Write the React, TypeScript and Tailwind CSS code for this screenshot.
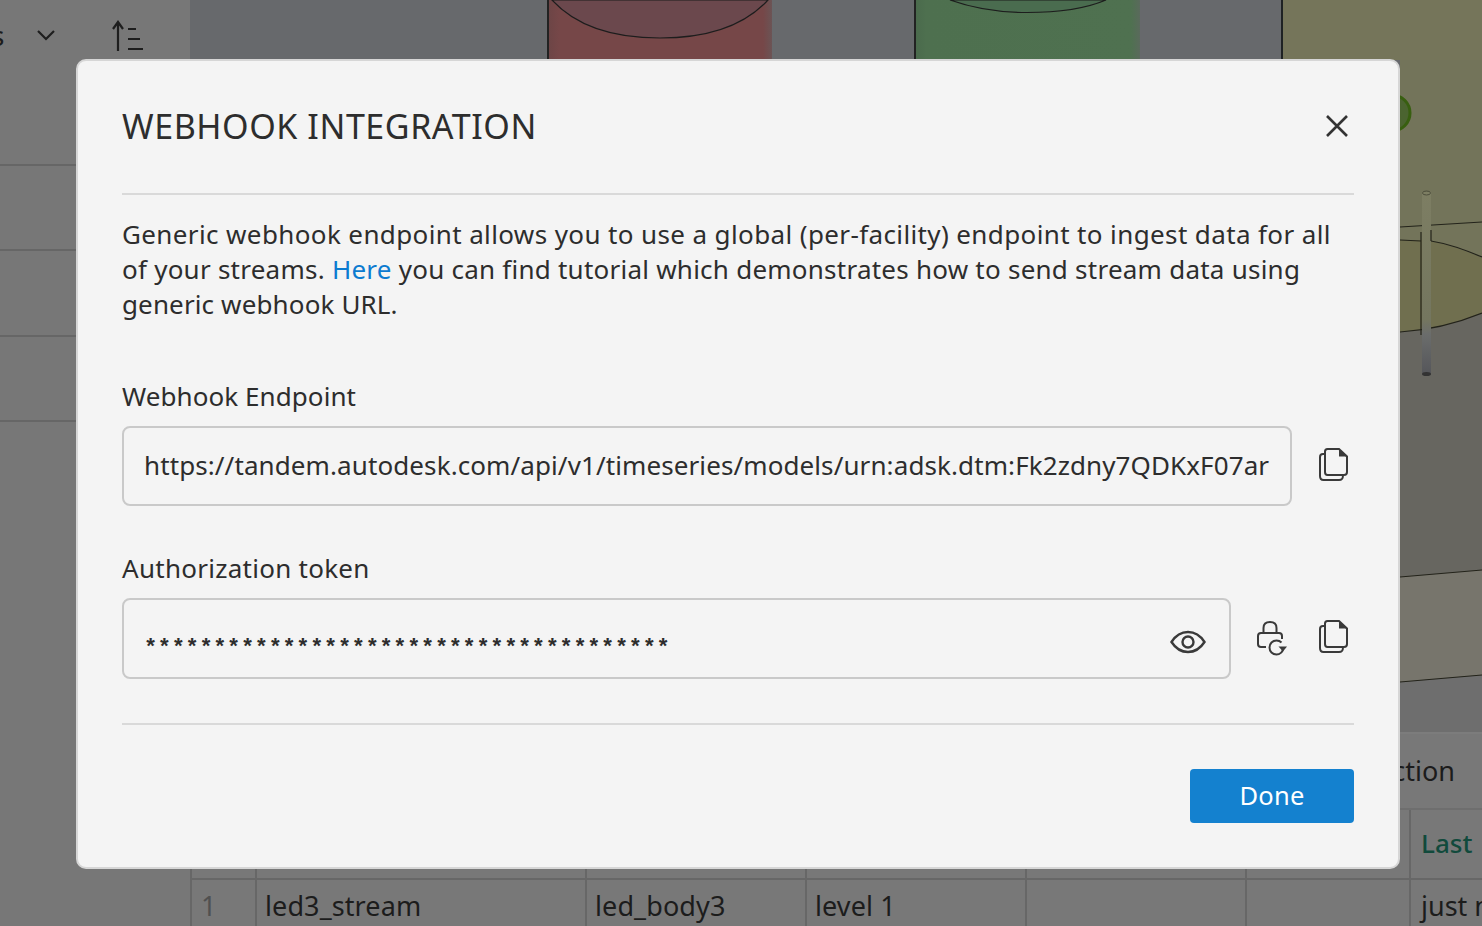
const font = { fontFamily: '"Noto Sans", "Liberation Sans", sans-serif' };

function CopyIcon() {
  return (
    <svg width="32" height="34" viewBox="0 0 32 34" fill="none" stroke="#3a3a3a" strokeWidth="2" className="block">
      <path d="M7 3.500C7 2 8 1 9.500 1H21L29 8.500V24C29 26 28 27 26 27H9.500C8 27 7 26 7 24Z" />
      <path d="M21 1.500V8.500H29L21 1.500Z" fill="#3a3a3a" stroke="none" />
      <path d="M7 6H5C3 6 2 7 2 9V28C2 31 3 32 5.500 32H21C24 32 25 31 25 27" />
    </svg>
  );
}

function LockIcon() {
  return (
    <svg width="32" height="38" viewBox="0 0 32 38" fill="none" stroke="#3a3a3a" strokeWidth="2" className="block">
      <path d="M7.500 13V8C7.500 4 10 2 14 2C18 2 20.500 4 20.500 8V13" />
      <path d="M10 27H5C3 27 2 26 2 24V16C2 14 3 13 5 13H23C25 13 26 14 26 16V19" />
      <path d="M25.500 22.500C24 21 22.500 20.500 20.500 20.500C16.500 20.500 13.500 23.500 13.500 27.500C13.500 31.500 16.500 34.500 20.500 34.500C24 34.500 26.500 32 27 29" />
      <path d="M22.500 26.500H31L27 31.500Z" fill="#3a3a3a" stroke="none" />
    </svg>
  );
}

function EyeIcon() {
  return (
    <svg width="36" height="24" viewBox="0 0 36 24" fill="none" stroke="#3a3a3a" strokeWidth="2.400" className="block">
      <path d="M1.500 12C6 5 11.500 2 18 2C24.500 2 30 5 34.500 12C30 19 24.500 22 18 22C11.500 22 6 19 1.500 12Z" />
      <circle cx="18" cy="12" r="5.500" />
    </svg>
  );
}

function CloseIcon() {
  return (
    <svg width="24" height="24" viewBox="0 0 24 24" fill="none" stroke="#333333" strokeWidth="2.600" className="block">
      <path d="M2 2L22 22M22 2L2 22" />
    </svg>
  );
}

function SortIcon() {
  return (
    <svg width="34" height="32" viewBox="0 0 34 32" fill="none" stroke="#1e1e1e" strokeWidth="2.200" className="block">
      <path d="M6 31V2M1 9L6 2L11 9" />
      <path d="M16 9H24M16 19H28M16 29H31" />
    </svg>
  );
}

function Scene() {
  return (
    <svg width="1292" height="732" viewBox="190 0 1292 732" className="block shrink-0" preserveAspectRatio="none">
      <defs>
        <linearGradient id="pole" x1="0" y1="0" x2="0" y2="1">
          <stop offset="0" stopColor="#7d7e63" />
          <stop offset="0.7" stopColor="#74765f" />
          <stop offset="0.78" stopColor="#6b6d6c" />
          <stop offset="1" stopColor="#55565a" />
        </linearGradient>
        <linearGradient id="red" x1="0" y1="0" x2="1" y2="0">
          <stop offset="0" stopColor="#6c4546" />
          <stop offset="0.05" stopColor="#764748" />
          <stop offset="0.96" stopColor="#764748" />
          <stop offset="1" stopColor="#6b5455" />
        </linearGradient>
        <linearGradient id="green" x1="0" y1="0" x2="1" y2="0">
          <stop offset="0" stopColor="#4a6a4c" />
          <stop offset="0.05" stopColor="#4e704f" />
          <stop offset="0.96" stopColor="#4f7150" />
          <stop offset="1" stopColor="#5a6a5c" />
        </linearGradient>
      </defs>
      <rect x="190" y="0" width="1292" height="732" fill="#67696c" />
      <path d="M548 0H772V60H548Z" fill="url(#red)" />
      <path d="M552 0C575 25 610 38 660 38C710 38 745 25 768 0Z" fill="#6b484d" stroke="#1d1d1d" strokeWidth="1.200" />
      <path d="M548 0V60" stroke="#222222" strokeWidth="2" />
      <path d="M915 0H1140V60H915Z" fill="url(#green)" />
      <path d="M950 0C975 9 1000 12.500 1027 12.500C1054 12.500 1085 9 1106 0Z" fill="#4a6c4f" stroke="#1d1d1d" strokeWidth="1.200" />
      <path d="M915 0V60" stroke="#222222" strokeWidth="2" />
      <path d="M1283 0H1482V60H1283Z" fill="#75755a" />
      <path d="M1282 0V60" stroke="#1f2224" strokeWidth="2" />
      <path d="M1400 60H1482V262H1400Z" fill="#73745a" />
      <path d="M1400 240H1425C1440 243 1460 248 1482 258V313C1460 322 1430 330 1400 332Z" fill="#706f4f" />
      <path d="M1400 332C1430 330 1460 322 1482 313V732H1400Z" fill="#676660" />
      <path d="M1400 577L1482 570V675L1400 682Z" fill="#77756c" />
      <path d="M1400 682L1482 675V732H1400Z" fill="#6e6e6e" />
      <circle cx="1392" cy="113" r="18" fill="#4b6430" stroke="#385f10" strokeWidth="3" />
      <path d="M1400 227L1482 222M1400 240L1421 241M1431 241C1450 244 1465 250 1482 257M1400 332C1430 330 1460 322 1482 313" stroke="#23231a" strokeWidth="1.200" fill="none" />
      <path d="M1400 577L1482 570M1400 682L1482 675" stroke="#23231a" strokeWidth="1.200" fill="none" />
      <rect x="1422" y="192" width="9" height="182" fill="url(#pole)" />
      <ellipse cx="1426.500" cy="193" rx="4" ry="2" fill="none" stroke="#4d4e3c" strokeWidth="1" />
      <ellipse cx="1426.500" cy="374" rx="4.500" ry="2" fill="#333333" />
      <path d="M1421 232V335M1431 230V241" stroke="#23231a" strokeWidth="1.200" />
    </svg>
  );
}

function Cell({ w, children, muted }: { w: string; children?: React.ReactNode; muted?: boolean }) {
  return (
    <div className={`${w} shrink-0 h-full border-r-[2px] border-[#676767] flex items-center text-[27px] tracking-[0.1px] ${muted ? "text-[#505050]" : "text-[#1c1c1c]"}`}>
      {children}
    </div>
  );
}

export default function App() {
  const stars = "*".repeat(38);
  return (
    <div className="relative w-[1482px] h-[926px] overflow-hidden flex bg-[#787878]" style={font}>
      <aside className="w-[190px] shrink-0 flex flex-col bg-[#777777]">
        <div className="h-[72px] relative overflow-hidden">
          <span className="absolute -left-[9px] top-[14px] text-[28px] text-[#1c1c1c]">s</span>
          <svg width="20" height="12" viewBox="0 0 20 12" fill="none" stroke="#1e1e1e" strokeWidth="2.200" className="absolute left-[36px] top-[29px]">
            <path d="M2 2L10 10L18 2" />
          </svg>
          <div className="absolute left-[112px] top-[20px]">
            <SortIcon />
          </div>
        </div>
        <div className="h-[94px] border-b-[2px] border-[#666666]" />
        <div className="h-[85px] border-b-[2px] border-[#666666]" />
        <div className="h-[86px] border-b-[2px] border-[#666666]" />
        <div className="h-[85px] border-b-[2px] border-[#666666]" />
      </aside>

      <main className="flex-1 flex flex-col min-w-0 overflow-hidden">
        <Scene />
        <div className="h-[78px] shrink-0 border-t-[2px] border-t-[#7c7c7c] border-b-[2px] border-b-[#6e6e6e] flex items-center justify-end pr-[27px] text-[27px] text-[#1c1c1c]">
          ction
        </div>
        <div className="h-[70px] shrink-0 flex border-b-[2px] border-[#676767]">
          <Cell w="w-[67px] border-l-[2px] pl-[7px]" />
          <Cell w="w-[330px] pl-[9px]" />
          <Cell w="w-[220px] pl-[9px]" />
          <Cell w="w-[220px] pl-[9px]" />
          <Cell w="w-[220px] pl-[9px]" />
          <Cell w="w-[164px] pl-[9px]" />
          <div className="flex-1 pl-[10px] pb-[2px] flex items-center text-[26px] font-medium text-[#114a3c]">Last</div>
        </div>
        <div className="h-[54px] shrink-0 flex pb-[2px]">
          <Cell w="w-[67px] border-l-[2px] pl-[9px]" muted>1</Cell>
          <Cell w="w-[330px] pl-[8px]">led3_stream</Cell>
          <Cell w="w-[220px] pl-[8px]">led_body3</Cell>
          <Cell w="w-[220px] pl-[8px]">level 1</Cell>
          <Cell w="w-[220px] pl-[9px]" />
          <Cell w="w-[164px] pl-[9px]" />
          <div className="flex-1 pl-[10px] flex items-center text-[27px] text-[#1c1c1c] whitespace-nowrap overflow-hidden">just now</div>
        </div>
      </main>

      <div
        role="dialog"
        className="absolute left-[76px] top-[59px] w-[1324px] h-[810px] rounded-[10px] border-[2px] border-[#d6d6d6] bg-[#f4f4f4] px-[44px] flex flex-col text-[#2d2d2d]"
      >
        <header className="h-[134px] shrink-0 border-b-[2px] border-[#d9d9d9] flex items-center justify-between pr-[5px] pb-[2px]">
          <h1 className="text-[34px] leading-none tracking-[0.57px] font-normal">WEBHOOK INTEGRATION</h1>
          <CloseIcon />
        </header>

        <p className="mt-[22px] text-[26px] leading-[35px] tracking-[0.38px]">
          Generic webhook endpoint allows you to use a global (per-facility) endpoint to ingest data for all{" "}
          <span className="tracking-[0.24px]">
            of your streams. <span className="text-[#0c7bd0]">Here</span> you can find tutorial which demonstrates how to send stream data using
          </span>{" "}
          <span className="tracking-[0.13px]">generic webhook URL.</span>
        </p>

        <label className="mt-[57px] block text-[26px] leading-[35px] tracking-[0.07px]">Webhook Endpoint</label>
        <div className="mt-[12px] flex items-start">
          <input
            readOnly
            value="https://tandem.autodesk.com/api/v1/timeseries/models/urn:adsk.dtm:Fk2zdny7QDKxF07arlQpVw"
            className="w-[1170px] h-[80px] rounded-[8px] border-[2px] border-[#c9c9c9] bg-transparent px-[20px] pb-[2px] text-[26px] tracking-[0.1px] text-[#2d2d2d] outline-none"
          />
          <div className="ml-[26px] mt-[22px]">
            <CopyIcon />
          </div>
        </div>

        <label className="mt-[45px] block text-[26px] leading-[35px] tracking-[0.27px]">Authorization token</label>
        <div className="mt-[12px] flex items-start">
          <div className="w-[1109px] h-[81px] rounded-[8px] border-[2px] border-[#c9c9c9] pl-[20px] pr-[23px] flex items-center justify-between">
            <span className="text-[22px] leading-none tracking-[0.65px] pt-[20px] font-bold" style={{ fontFamily: '"Liberation Mono", monospace' }}>{stars}</span>
            <div className="mt-[6px]">
              <EyeIcon />
            </div>
          </div>
          <div className="ml-[25px] mt-[22px]">
            <LockIcon />
          </div>
          <div className="ml-[30px] mt-[22px]">
            <CopyIcon />
          </div>
        </div>

        <div className="mt-[44px] h-[2px] shrink-0 bg-[#d9d9d9]" />
        <div className="mt-[44px] flex justify-end">
          <button className="w-[164px] h-[54px] rounded-[4px] bg-[#1481cf] text-white text-[25.500px] tracking-[0.2px] pb-[2px]">Done</button>
        </div>
      </div>
    </div>
  );
}
